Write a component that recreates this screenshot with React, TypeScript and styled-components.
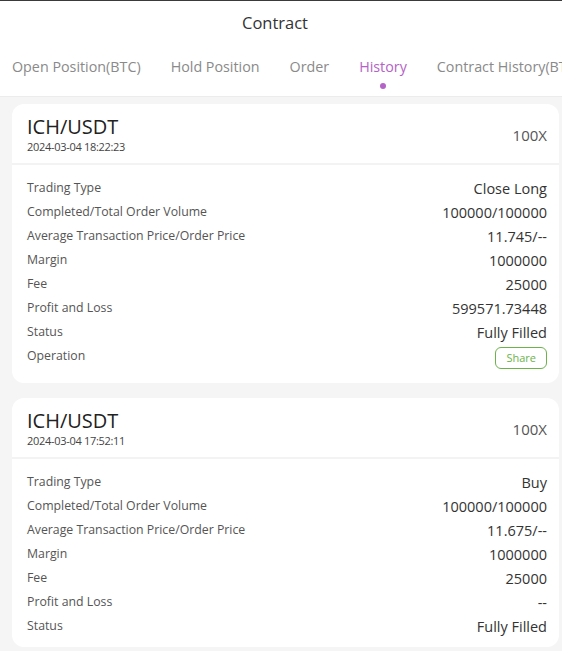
import React from "react";
import styled, { createGlobalStyle } from "styled-components";

const Global = createGlobalStyle`
  html, body { margin: 0; padding: 0; background: #f5f5f5; }
  body { font-family: "Open Sans", "Noto Sans", Arial, sans-serif; }
  * { box-sizing: border-box; }
`;

const Page = styled.div`
  width: 562px;
  height: 651px;
  overflow: hidden;
  background: #f5f5f5;
  border-top: 1px solid #3a3a3a;
`;

const TopBar = styled.header`
  background: #fff;
  height: 43px;
  display: flex;
  align-items: center;
  justify-content: center;
  padding-right: 12px;
  font-size: 16.5px;
  color: #333;
`;

const Tabs = styled.nav`
  background: #fff;
  height: 53px;
  display: flex;
  gap: 30px;
  padding-left: 12px;
  white-space: nowrap;
  overflow: hidden;
  border-bottom: 1px solid #ececec;
`;

const Tab = styled.div<{ $active?: boolean }>`
  position: relative;
  flex: none;
  font-size: 14.3px;
  line-height: 20px;
  padding-top: 13px;
  color: ${(p) => (p.$active ? "#b463c6" : "#8a8a8a")};
  &::after {
    content: "";
    display: ${(p) => (p.$active ? "block" : "none")};
    position: absolute;
    left: 50%;
    top: 39px;
    width: 6px;
    height: 6px;
    margin-left: -3px;
    border-radius: 50%;
    background: #b463c6;
  }
`;

const List = styled.div`
  display: flex;
  flex-direction: column;
  gap: 15px;
  padding: 7px 3px 0 12px;
`;

const Card = styled.section`
  background: #fff;
  border-radius: 12px;
`;

const CardHead = styled.div`
  height: 61px;
  display: flex;
  align-items: center;
  justify-content: space-between;
  padding: 0 12px 0 15px;
  border-bottom: 2px solid #f3f3f3;
`;

const Pair = styled.div`
  display: flex;
  flex-direction: column;
`;

const PairName = styled.div`
  font-size: 20px;
  line-height: 26px;
  color: #222;
`;

const PairDate = styled.div`
  font-size: 11px;
  line-height: 14px;
  color: #444;
  letter-spacing: -0.3px;
`;

const Lever = styled.div`
  font-size: 15px;
  color: #555;
  margin-top: 2px;
`;

const Body = styled.div<{ $extra?: boolean }>`
  padding: 11px 12px ${(p) => (p.$extra ? "15px" : "9px")} 15px;
`;

const Row = styled.div`
  height: 24px;
  display: flex;
  align-items: center;
  justify-content: space-between;
`;

const Label = styled.span`
  font-size: 12.3px;
  color: #555;
  margin-top: -1px;
`;

const Value = styled.span`
  font-size: 14.5px;
  color: #333;
`;

const ShareBtn = styled.button`
  height: 22px;
  padding: 0 10px;
  border: 1px solid #6bb34a;
  border-radius: 6px;
  background: #fff;
  color: #6bb34a;
  font-family: inherit;
  font-size: 11px;
  line-height: 20px;
  margin-top: 4px;
`;

type Item = {
  date: string;
  values: [string, string][];
  share?: boolean;
};

const items: Item[] = [
  {
    date: "2024-03-04 18:22:23",
    values: [
      ["Trading Type", "Close Long"],
      ["Completed/Total Order Volume", "100000/100000"],
      ["Average Transaction Price/Order Price", "11.745/--"],
      ["Margin", "1000000"],
      ["Fee", "25000"],
      ["Profit and Loss", "599571.73448"],
      ["Status", "Fully Filled"],
    ],
    share: true,
  },
  {
    date: "2024-03-04 17:52:11",
    values: [
      ["Trading Type", "Buy"],
      ["Completed/Total Order Volume", "100000/100000"],
      ["Average Transaction Price/Order Price", "11.675/--"],
      ["Margin", "1000000"],
      ["Fee", "25000"],
      ["Profit and Loss", "--"],
      ["Status", "Fully Filled"],
    ],
  },
];

const tabs = ["Open Position(BTC)", "Hold Position", "Order", "History", "Contract History(BTC)"];

export default function App() {
  return (
    <Page>
      <Global />
      <TopBar>Contract</TopBar>
      <Tabs>
        {tabs.map((t) => (
          <Tab key={t} $active={t === "History"}>
            {t}
          </Tab>
        ))}
      </Tabs>
      <List>
        {items.map((it) => (
          <Card key={it.date}>
            <CardHead>
              <Pair>
                <PairName>ICH/USDT</PairName>
                <PairDate>{it.date}</PairDate>
              </Pair>
              <Lever>100X</Lever>
            </CardHead>
            <Body $extra={it.share}>
              {it.values.map(([l, v]) => (
                <Row key={l}>
                  <Label>{l}</Label>
                  <Value>{v}</Value>
                </Row>
              ))}
              {it.share && (
                <Row>
                  <Label>Operation</Label>
                  <ShareBtn>Share</ShareBtn>
                </Row>
              )}
            </Body>
          </Card>
        ))}
      </List>
    </Page>
  );
}
